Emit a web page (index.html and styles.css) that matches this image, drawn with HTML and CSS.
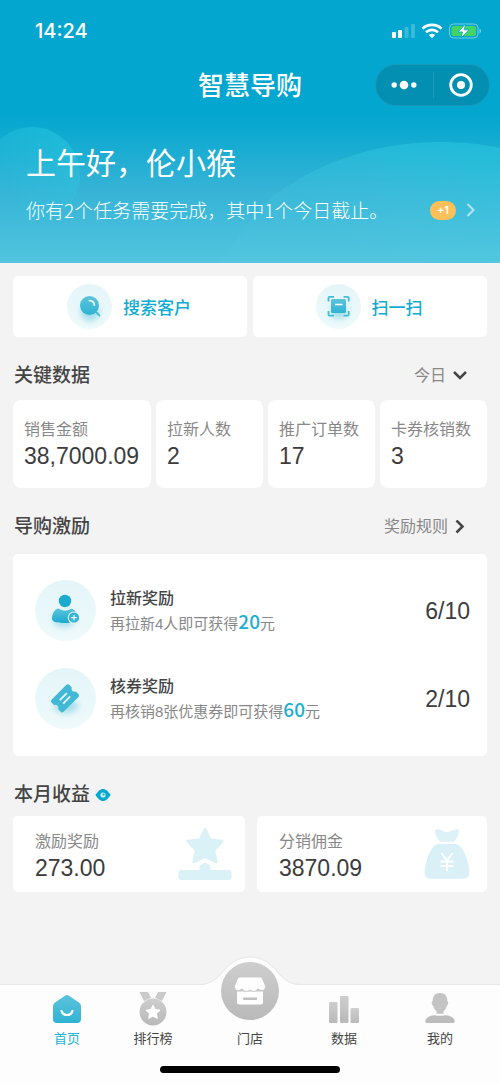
FILE: index.html
```html
<!DOCTYPE html>
<html lang="zh-CN">
<head>
<meta charset="utf-8">
<meta name="viewport" content="width=device-width, initial-scale=1">
<title>智慧导购</title>
<link rel="stylesheet" href="styles.css">
</head>
<body>
<div class="page">
  <header class="hero">
    <svg class="hero-art" viewBox="0 0 500 263" preserveAspectRatio="xMidYMin slice" aria-hidden="true">
      <defs>
        <linearGradient id="bubble" x1="1" y1="0.2" x2="0.4" y2="1">
          <stop offset="0" stop-color="#2ccbe0" stop-opacity=".5"/>
          <stop offset="1" stop-color="#2ccbe0" stop-opacity="0"/>
        </linearGradient>
        <linearGradient id="hill" gradientUnits="userSpaceOnUse" x1="440" y1="142" x2="400" y2="263">
          <stop offset="0" stop-color="#2ccbe0" stop-opacity=".5"/>
          <stop offset="1" stop-color="#5ad0e4" stop-opacity=".1"/>
        </linearGradient>
      </defs>
      <circle cx="32" cy="175" r="48" fill="url(#bubble)"/>
      <path d="M262 205C310 164 375 142 440 142C462 142 482 144 500 148V263H220Z" fill="url(#hill)"/>
    </svg>

    <div class="status">
      <span class="status-time">14:24</span>
      <svg class="status-icons" width="90" height="16" viewBox="0 0 90 16" aria-hidden="true">
        <g fill="#fff">
          <rect x="1" y="9" width="4" height="6" rx="1"/>
          <rect x="7" y="7" width="4" height="8" rx="1"/>
          <rect x="13.500" y="4" width="4" height="11" rx="1" opacity=".22"/>
          <rect x="20" y="1" width="4" height="14" rx="1" opacity=".22"/>
        </g>
        <g fill="none" stroke="#fff" stroke-width="2.600">
          <path d="M31.500 5.700C36.500 .6 45.500 .6 50.500 5.700"/>
          <path d="M35 9.400C38.300 6 43.700 6 47 9.400"/>
        </g>
        <path d="M37.800 12C39.600 10.300 42.400 10.300 44.200 12L41 15.200Z" fill="#fff"/>
        <rect x="58.500" y="1" width="28.500" height="14" rx="4" fill="none" stroke="#fff" stroke-opacity=".45"/>
        <rect x="60.500" y="3" width="24.500" height="10" rx="2" fill="#43d465"/>
        <path d="M88.500 5.500C90.400 6.300 90.400 9.700 88.500 10.500Z" fill="#fff" opacity=".5"/>
        <path d="M74.500 1L67 9H71.500L70 15L78 6.800H73.300Z" fill="#fff" stroke="#03a6cf" stroke-width=".8"/>
      </svg>
    </div>

    <div class="titlebar">
      <h1 class="titlebar-name">智慧导购</h1>
      <div class="capsule">
        <button class="capsule-btn" type="button" aria-label="更多">
          <svg width="26" height="10" viewBox="0 0 26 10"><g fill="#fff"><circle cx="3.200" cy="5" r="2.700"/><circle cx="13" cy="5" r="4.300"/><circle cx="22.800" cy="5" r="2.700"/></g></svg>
        </button>
        <button class="capsule-btn" type="button" aria-label="关闭">
          <svg width="24" height="24" viewBox="0 0 24 24"><circle cx="12" cy="12" r="10.300" fill="none" stroke="#fff" stroke-width="2.800"/><circle cx="12" cy="12" r="4" fill="#fff"/></svg>
        </button>
      </div>
    </div>

    <div class="greeting">
      <h2 class="greeting-title">上午好，伦小猴</h2>
      <a class="greeting-task" href="#tasks">
        <span class="greeting-text">你有2个任务需要完成，其中1个今日截止。</span>
        <span class="tag">+1</span>
        <svg width="9" height="14" viewBox="0 0 9 14" fill="none" stroke="#fff" stroke-opacity=".6" stroke-width="2"><path d="M1.500 1L7.500 7L1.500 13"/></svg>
      </a>
    </div>
  </header>

  <main class="content">
    <div class="actions">
      <button class="action" type="button">
        <svg width="45" height="45" viewBox="0 0 45 45" aria-hidden="true">
          <defs>
            <linearGradient id="ico" x1="0" y1="0" x2="0" y2="1"><stop offset="0" stop-color="#5cc3dc"/><stop offset="1" stop-color="#2fb3d3"/></linearGradient>
            <linearGradient id="disc" x1="0" y1="0" x2="0" y2="1"><stop offset="0" stop-color="#e4f5f9"/><stop offset="1" stop-color="#eefafb"/></linearGradient>
            <filter id="soft" x="-50%" y="-50%" width="200%" height="200%"><feGaussianBlur stdDeviation="3"/></filter>
          </defs>
          <circle cx="22.500" cy="22.500" r="22.500" fill="url(#disc)"/>
          <circle cx="23" cy="28" r="9" fill="#9fdbe8" filter="url(#soft)"/>
          <circle cx="22.500" cy="21.500" r="9.500" fill="url(#ico)"/>
          <path d="M22.500 16.600C25.200 16.600 27.200 18.400 27.300 21" fill="none" stroke="#e9f8fb" stroke-width="1.800" stroke-linecap="round"/>
          <path d="M29.600 28.500L32.300 31.400" stroke="#45bbd7" stroke-width="2" stroke-linecap="round"/>
        </svg>
        <span>搜索客户</span>
      </button>
      <button class="action" type="button">
        <svg width="45" height="45" viewBox="0 0 45 45" aria-hidden="true">
          <circle cx="22.500" cy="22.500" r="22.500" fill="url(#disc)"/>
          <rect x="16" y="21" width="14" height="13" fill="#9fdbe8" filter="url(#soft)"/>
          <rect x="15" y="15" width="15" height="14" rx="1.500" fill="url(#ico)"/>
          <path d="M19 20.500H26.500" stroke="#fff" stroke-width="1.500"/>
          <path d="M12.500 17.500V14Q12.500 12.800 13.700 12.800H18M27.500 12.800H31.500Q32.700 12.800 32.700 14V17.500M32.700 27V30.500Q32.700 31.700 31.500 31.700H27.500M18 31.700H13.700Q12.500 31.700 12.500 30.500V27" fill="none" stroke="#45bbd7" stroke-width="1.800"/>
        </svg>
        <span>扫一扫</span>
      </button>
    </div>

    <section>
      <div class="head">
        <h2 class="head-title">关键数据</h2>
        <label class="period">
          <select class="period-select" aria-label="时间范围"><option>今日</option></select>
          <svg width="14" height="10" viewBox="0 0 14 10" fill="none" stroke="#444" stroke-width="2.500"><path d="M1 1L7 7L13 1"/></svg>
        </label>
      </div>
      <div class="stats">
        <div class="stat"><div class="label">销售金额</div><div class="value">38,7000.09</div></div>
        <div class="stat"><div class="label">拉新人数</div><div class="value">2</div></div>
        <div class="stat"><div class="label">推广订单数</div><div class="value">17</div></div>
        <div class="stat"><div class="label">卡券核销数</div><div class="value">3</div></div>
      </div>
    </section>

    <section>
      <div class="head head-loose">
        <h2 class="head-title">导购激励</h2>
        <a class="rules" href="#rules">奖励规则
          <svg width="13" height="14" viewBox="0 0 13 14" fill="none" stroke="#444" stroke-width="2.500"><path d="M2.500 .5L8.500 6.500L2.500 12.500"/></svg>
        </a>
      </div>
      <div class="rewards">
        <div class="reward">
          <svg width="61" height="61" viewBox="0 0 61 61" aria-hidden="true">
            <defs><linearGradient id="person" x1="0" y1="0" x2="0" y2="1"><stop offset="0" stop-color="#5dc4dd"/><stop offset="1" stop-color="#19a9cf"/></linearGradient></defs>
            <circle cx="30.500" cy="30.500" r="30.500" fill="url(#disc)"/>
            <ellipse cx="29" cy="40" rx="11" ry="7" fill="#a5ddea" filter="url(#soft)"/>
            <circle cx="30" cy="21" r="6.200" fill="#1babd0"/>
            <path d="M17 38.500C17.300 33 19.500 30 22.500 28.700Q23.500 28.300 24.500 29C28 31.200 32 31.200 35.500 29Q36.500 28.300 37.800 29C41 31 42.500 34 42.500 39C40 42.500 35 43 30 43C24 43 17 42.500 17 38.500Z" fill="url(#person)"/>
            <circle cx="39" cy="37.700" r="5.700" fill="#35b5d4" stroke="#e6f6fa" stroke-width="1.200"/>
            <path d="M36.200 37.700H41.800M39 34.900V40.500" stroke="#e6f6fa" stroke-width="1.200"/>
          </svg>
          <div class="reward-text">
            <h3 class="reward-title">拉新奖励</h3>
            <p class="reward-note">再拉新4人即可获得<strong class="amount">20</strong>元</p>
          </div>
          <div class="value">6/10</div>
        </div>
        <div class="reward">
          <svg width="61" height="61" viewBox="0 0 61 61" aria-hidden="true">
            <circle cx="30.500" cy="30.500" r="30.500" fill="url(#disc)"/>
            <ellipse cx="31" cy="38" rx="12" ry="7" fill="#a5ddea" filter="url(#soft)"/>
            <g transform="translate(30 30.300) rotate(-45)">
              <path d="M-10.500 -8.500H10.500Q12.500 -8.500 12.500 -6.500V-3.500Q12.500 -2.500 11.500 -2.300Q9.300 0 11.500 2.300Q12.500 2.500 12.500 3.500V6.500Q12.500 8.500 10.500 8.500H-10.500Q-12.500 8.500 -12.500 6.500V3.500Q-12.500 2.500 -11.500 2.300Q-9.300 0 -11.500 -2.300Q-12.500 -2.500 -12.500 -3.500V-6.500Q-12.500 -8.500 -10.500 -8.500Z" fill="#42b8d7"/>
              <path d="M-5 -2.400H5M-5 2.400H5" stroke="#e6f6fa" stroke-width="1.800"/>
            </g>
          </svg>
          <div class="reward-text">
            <h3 class="reward-title">核券奖励</h3>
            <p class="reward-note">再核销8张优惠券即可获得<strong class="amount">60</strong>元</p>
          </div>
          <div class="value">2/10</div>
        </div>
      </div>
    </section>

    <section>
      <div class="head head-tight">
        <h2 class="head-title">本月收益</h2>
        <button class="eye" type="button" aria-label="显示金额">
          <svg width="16" height="12" viewBox="0 0 16 12"><path d="M.3 6C3.500 1.500 5.700 0 8 0S12.500 1.500 15.700 6C12.500 10.500 10.300 12 8 12S3.500 10.500 .3 6Z" fill="#06a8cf"/><circle cx="8" cy="6" r="2.600" fill="#c9edf5"/><circle cx="8.600" cy="5.400" r="1" fill="#06a8cf"/></svg>
        </button>
      </div>
      <div class="incomes">
        <div class="income">
          <div class="income-text"><div class="label">激励奖励</div><div class="value">273.00</div></div>
          <svg width="54" height="54" viewBox="0 0 54 54" aria-hidden="true">
            <g fill="#daf1f7">
              <path d="M27 2L32 12.500L44.500 14L36 23.500L38.500 35L27 29.500L15.500 35L18 23.500L9.500 14L22 12.500Z" stroke="#daf1f7" stroke-width="2.500" stroke-linejoin="round"/>
              <path d="M21.500 43V40Q21.500 38 23.500 37.200L27 35.500L30.500 37.200Q32.500 38 32.500 40V43H50.500Q53.500 43 53.500 46V50Q53.500 53 50.500 53H3.500Q.5 53 .5 50V46Q.5 43 3.500 43Z"/>
              <path d="M18.500 37.500L27 33L35.500 37.500" fill="none" stroke="#fff" stroke-width="1.500"/>
            </g>
          </svg>
        </div>
        <div class="income">
          <div class="income-text"><div class="label">分销佣金</div><div class="value">3870.09</div></div>
          <svg class="bag" width="46" height="50" viewBox="0 0 46 50" aria-hidden="true">
            <path d="M11 3Q10 0 14 .3C18 1 20 3 23 3S28 1 32 .3Q36 0 35 3C34.500 7 32.500 9 31.500 11Q30.500 12.700 28.500 12.700H17.500Q15.500 12.700 14.500 11C13.500 9 11.500 7 11 3Z" fill="#dcf2f7"/>
            <path d="M13.500 15H32.500C40 18 43.500 30 45.300 41Q46.500 49.700 39 49.700H7Q-.5 49.700 .7 41C2.500 30 6 18 13.500 15Z" fill="#d8f0f6"/>
            <path d="M17.500 24L23 31.500L28.500 24M23 31.500V42M16.500 32.500H29.500M16.500 37H29.500" fill="none" stroke="#fff" stroke-width="2"/>
          </svg>
        </div>
      </div>
    </section>
  </main>

  <nav class="tabbar">
    <svg class="tabbar-bump" width="104" height="30" viewBox="0 0 104 30" aria-hidden="true">
      <path d="M0 29C11 29 16.500 25 23 18C31 8 39 1 52 1S73 8 81 18C87.500 25 93 29 104 29V30H0Z" fill="#fdfdfd"/>
      <path d="M0 28.500C11 28.500 16.500 25 23 18C31 8 39 1 52 1S73 8 81 18C87.500 25 93 28.500 104 28.500" fill="none" stroke="#e6e6e6"/>
    </svg>
    <div class="tabs">
      <a class="tab tab-active" href="#home">
        <svg width="36" height="36" viewBox="0 0 36 36" aria-hidden="true">
          <path d="M16 4.800Q18 3.400 20 4.800L30 11.500Q32 13 32 15V28Q32 32 28 32H8Q4 32 4 28V15Q4 13 6 11.500Z" fill="url(#ico)"/>
          <path d="M12.500 20C14.500 25.300 21.500 25.300 23.500 20" fill="none" stroke="#fff" stroke-width="2.200" stroke-linecap="round"/>
        </svg>
        <span>首页</span>
      </a>
      <a class="tab" href="#rank">
        <svg width="36" height="36" viewBox="0 0 36 36" aria-hidden="true">
          <defs><linearGradient id="gray" x1="0" y1="0" x2="0" y2="1"><stop offset="0" stop-color="#cecece"/><stop offset="1" stop-color="#b9b9b9"/></linearGradient></defs>
          <path d="M4.500 1H13L16 6.800L9 10ZM31.500 1H23L20 6.800L27 10Z" fill="#cacaca"/>
          <circle cx="18" cy="21" r="13.500" fill="url(#gray)"/>
          <path d="M18 14.200L20.200 18.500L25 19.200L21.500 22.600L22.300 27.400L18 25.100L13.700 27.400L14.500 22.600L11 19.200L15.800 18.500Z" fill="#fff" stroke="#fff" stroke-linejoin="round"/>
        </svg>
        <span>排行榜</span>
      </a>
      <a class="tab" href="#store">
        <svg class="tab-store" width="58" height="58" viewBox="0 0 58 58" aria-hidden="true">
          <circle cx="29" cy="29" r="29" fill="url(#gray)"/>
          <path d="M16 29.500H42V40Q42 42.500 39.500 42.500H18.500Q16 42.500 16 40Z" fill="#fff"/>
          <path d="M19 15H39Q40.800 15 41.500 16.700L44.300 23.500C45 26 43.500 28.500 41 28.500C39 28.500 38 27 37 27S35 29.500 33 29.500S30 28 29 28S27 29.500 25 29.500S22 27 21 27S19 28.500 17 28.500C14.500 28.500 13 26 13.700 23.500L16.500 16.700Q17.200 15 19 15Z" fill="#fff" stroke="#c4c4c4" stroke-width=".8"/>
          <path d="M23 36.800H35" stroke="#c0c0c0" stroke-width="2.400" stroke-linecap="round"/>
        </svg>
        <span>门店</span>
      </a>
      <a class="tab" href="#data">
        <svg width="36" height="36" viewBox="0 0 36 36" aria-hidden="true">
          <g fill="url(#gray)"><rect x="3" y="11" width="8.500" height="21" rx="1"/><rect x="14" y="5" width="8.500" height="27" rx="1"/><rect x="24.500" y="17" width="8.500" height="15" rx="1"/></g>
        </svg>
        <span>数据</span>
      </a>
      <a class="tab" href="#me">
        <svg width="36" height="36" viewBox="0 0 36 36" aria-hidden="true">
          <path d="M18 2C23 2 25.500 5.500 25.300 10C26.700 10.500 26.500 14 24.800 15C24 18 22.500 19.500 21.500 20.300V22.700H14.500V20.300C13.500 19.500 12 18 11.200 15C9.500 14 9.300 10.500 10.700 10C10.500 5.500 13 2 18 2Z" fill="#c4c4c4"/>
          <path d="M13 24.200C16 25 20 25 23 24.200C29 24.500 32.700 27 32.700 30.500Q32.700 32 31 32H5Q3.300 32 3.300 30.500C3.300 27 7 24.500 13 24.200Z" fill="#bcbcbc"/>
        </svg>
        <span>我的</span>
      </a>
    </div>
    <div class="home-bar"></div>
  </nav>
</div>
</body>
</html>
```

FILE: styles.css
```css
* {
  box-sizing: border-box;
}

body,
h1,
h2,
h3,
p {
  margin: 0;
}

body {
  background: #f3f3f3;
  color: #444;
  font-family: "Liberation Sans", "Noto Sans CJK SC", sans-serif;
}

h1,
h2,
h3 {
  font-weight: 500;
}

a {
  color: inherit;
  text-decoration: none;
}

button,
select {
  margin: 0;
  padding: 0;
  border: 0;
  background: none;
  color: inherit;
  font: inherit;
}

svg {
  display: block;
  flex: none;
}

.page {
  display: flex;
  flex-direction: column;
  min-height: 100vh;
}

/* Header */
.hero {
  position: relative;
  background: linear-gradient(#03a6cf 0, #03a6cf 44%, #35b3d6 72%, #52c5df 100%);
  color: #fff;
}

.hero-art {
  position: absolute;
  inset: 0;
  width: 100%;
  height: 100%;
}

.status,
.titlebar,
.greeting {
  position: relative;
}

.status {
  display: flex;
  align-items: center;
  justify-content: space-between;
  height: 62px;
  padding: 0 19px 0 35px;
}

.status-time {
  font: 500 20px/24px Inter, sans-serif;
}

.titlebar {
  display: grid;
  grid-template-columns: 1fr auto 1fr;
  align-items: center;
  height: 46px;
  padding: 0 10px;
}

.titlebar-name {
  grid-column: 2;
  padding-top: 2px;
  font-size: 26px;
  line-height: 36px;
}

.capsule {
  display: grid;
  grid-template-columns: 1fr 1fr;
  align-items: center;
  justify-self: end;
  width: 115px;
  height: 42px;
  border: 1px solid #1a9aba;
  border-radius: 21px;
  background: #028fb2;
}

.capsule-btn {
  display: grid;
  place-items: center;
  height: 26px;
}

.capsule-btn + .capsule-btn {
  border-left: 1px solid #1e9dbc;
}

.greeting {
  padding: 36px 25px 41px 26px;
}

.greeting-title {
  font-size: 30px;
  font-weight: 400;
  line-height: 40px;
}

.greeting-task {
  display: flex;
  align-items: center;
  margin-top: 14px;
}

.greeting-text {
  flex: 1;
  font-family: "Noto Sans CJK SC", sans-serif;
  font-size: 19px;
  font-weight: 300;
  line-height: 24px;
  white-space: nowrap;
}

.tag {
  margin-right: 10px;
  padding: 0 7px;
  border-radius: 10px;
  background: #fdc058;
  font: 600 11px/19px Inter, sans-serif;
}

/* Content */
.content {
  padding: 13px;
}

.actions {
  display: grid;
  grid-template-columns: 1fr 1fr;
  gap: 6px;
}

.action {
  display: flex;
  align-items: center;
  justify-content: center;
  gap: 11px;
  height: 61px;
  padding-right: 2px;
  border-radius: 5px;
  background: #fff;
  color: #0fabd1;
  font-size: 17px;
  font-weight: 500;
}

.head {
  display: flex;
  align-items: center;
  padding: 26px 20px 11px 1px;
  line-height: 26px;
}

.head-loose {
  padding-bottom: 14px;
}

.head-tight {
  padding-bottom: 8px;
}

.head-title {
  font-size: 19px;
}

.period,
.rules {
  display: flex;
  align-items: center;
  gap: 6px;
  margin-left: auto;
  color: #888;
  font-size: 16px;
}

.period-select {
  appearance: none;
}

.eye {
  margin-left: 5px;
}

.label {
  color: #888;
  font-size: 16px;
  line-height: 26px;
  white-space: nowrap;
}

.value {
  color: #3c3c3c;
  font-size: 23px;
  line-height: 26px;
}

.stats {
  display: grid;
  grid-template-columns: 138fr 107fr 107fr 107fr;
  gap: 5px;
}

.stat {
  padding: 17px 11px 19px;
  border-radius: 8px;
  background: #fff;
}

.rewards {
  display: grid;
  gap: 27px;
  padding: 26px 17px 27px 22px;
  border-radius: 5px;
  background: #fff;
}

.reward {
  display: flex;
  align-items: center;
  gap: 14px;
}

.reward-text {
  flex: 1;
  padding-top: 2px;
}

.reward-title {
  font-size: 16px;
  line-height: 24px;
}

.reward-note {
  color: #888;
  font-size: 15px;
  line-height: 24px;
}

.amount {
  color: #1aaed2;
  font-family: "Noto Sans CJK SC", sans-serif;
  font-size: 19px;
  font-weight: 500;
  line-height: 20px;
}

.incomes {
  display: grid;
  grid-template-columns: 232fr 230fr;
  gap: 12px;
}

.income {
  display: flex;
  align-items: center;
  justify-content: space-between;
  padding: 11px 13px 11px 22px;
  border-radius: 5px;
  background: #fff;
}

.income-text {
  padding-top: 2px;
}

.bag {
  margin-right: 4px;
}

/* Bottom navigation */
.tabbar {
  position: sticky;
  bottom: 0;
  margin-top: auto;
  border-top: 1px solid #e8e8e8;
  background: #fdfdfd;
}

.tabbar-bump {
  position: absolute;
  bottom: 100%;
  left: 50%;
  margin: 0 0 -1px -52px;
}

.tabs {
  display: grid;
  grid-template-columns: 86fr 86fr 108fr 80fr 112fr;
  align-items: end;
  padding: 6px 4px 0 24px;
}

.tab {
  position: relative;
  display: flex;
  flex-direction: column;
  align-items: center;
  gap: 2px;
  font-size: 13px;
  line-height: 20px;
}

.tab-active {
  color: #24b2d4;
}

.tab-store {
  margin: -29px 0 7px;
}

.home-bar {
  width: 36%;
  height: 7px;
  margin: 17px auto 10px;
  border-radius: 4px;
  background: #000;
}
```
